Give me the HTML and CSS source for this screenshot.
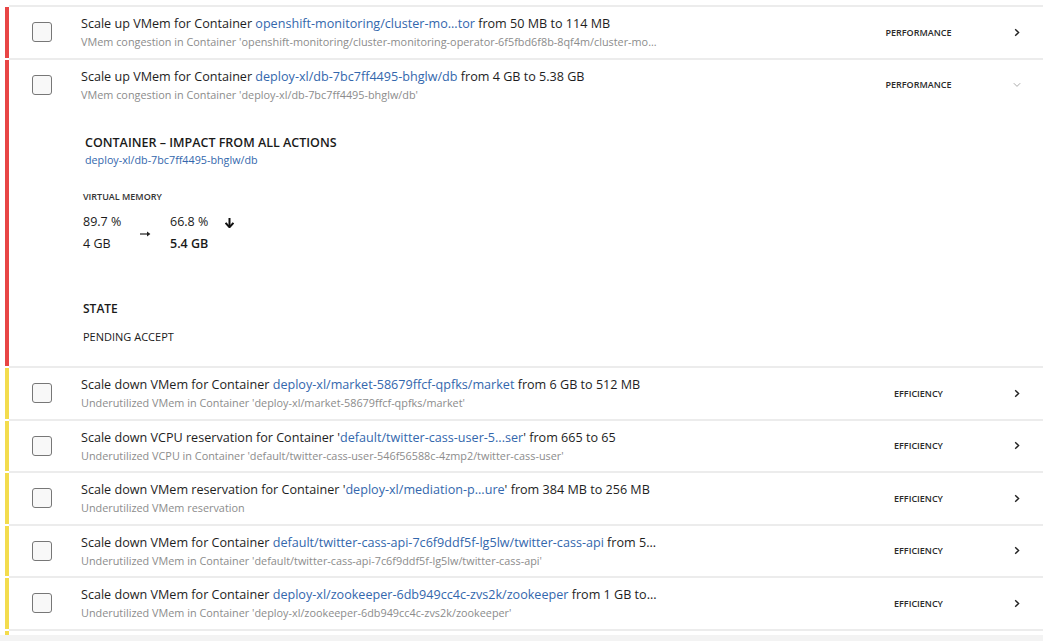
FILE: index.html
```html
<!DOCTYPE html>
<html>
<head>
<meta charset="utf-8">
<link rel="stylesheet" href="styles.css">
</head>
<body>
<div class="list">
  <div class="row sev-red">
    <div class="bar"></div>
    <div class="main">
      <div class="head">
        <div class="check"><span class="box"></span></div>
        <div class="text">
          <div class="title">Scale up VMem for Container <span class="link">openshift-monitoring/cluster-mo...tor</span> from 50 MB to 114 MB</div>
          <div class="sub">VMem congestion in Container 'openshift-monitoring/cluster-monitoring-operator-6f5fbd6f8b-8qf4m/cluster-mo...</div>
        </div>
        <div class="cat">PERFORMANCE</div>
        <div class="chev"><svg width="6" height="9" viewBox="0 0 6 9"><path d="M1.2 1.2 L4.6 4.5 L1.2 7.8" fill="none" stroke="#222" stroke-width="1.4"/></svg></div>
      </div>
    </div>
  </div>

  <div class="row sev-red">
    <div class="bar"></div>
    <div class="main">
      <div class="head">
        <div class="check"><span class="box"></span></div>
        <div class="text">
          <div class="title">Scale up VMem for Container <span class="link">deploy-xl/db-7bc7ff4495-bhglw/db</span> from 4 GB to 5.38 GB</div>
          <div class="sub">VMem congestion in Container 'deploy-xl/db-7bc7ff4495-bhglw/db'</div>
        </div>
        <div class="cat">PERFORMANCE</div>
        <div class="chev"><svg width="8" height="6" viewBox="0 0 8 6"><path d="M0.8 1.2 L4 4.4 L7.2 1.2" fill="none" stroke="#aaa" stroke-width="1"/></svg></div>
      </div>
      <div class="detail">
        <div class="d-title">CONTAINER – IMPACT FROM ALL ACTIONS</div>
        <div class="d-link">deploy-xl/db-7bc7ff4495-bhglw/db</div>
        <div class="d-label">VIRTUAL MEMORY</div>
        <div class="metrics">
          <div class="m-col">
            <div class="m-val">89.7 %</div>
            <div class="m-val">4 GB</div>
          </div>
          <div class="m-arrow"><svg width="11" height="6" viewBox="0 0 11 6"><path d="M0 3 H9" stroke="#222" stroke-width="1.2"/><path d="M7 0.6 L10.4 3 L7 5.4 Z" fill="#222"/></svg></div>
          <div class="m-col">
            <div class="m-val">66.8 %</div>
            <div class="m-val strong">5.4 GB</div>
          </div>
          <div class="m-down"><svg width="9" height="10" viewBox="0 0 9 10"><path d="M4.5 0 V8" stroke="#111" stroke-width="2"/><path d="M0.6 4.8 L4.5 9.2 L8.4 4.8" fill="none" stroke="#111" stroke-width="2"/></svg></div>
        </div>
        <div class="d-state">STATE</div>
        <div class="d-state-val">PENDING ACCEPT</div>
      </div>
    </div>
  </div>

  <div class="row sev-yellow">
    <div class="bar"></div>
    <div class="main">
      <div class="head">
        <div class="check"><span class="box"></span></div>
        <div class="text">
          <div class="title">Scale down VMem for Container <span class="link">deploy-xl/market-58679ffcf-qpfks/market</span> from 6 GB to 512 MB</div>
          <div class="sub">Underutilized VMem in Container 'deploy-xl/market-58679ffcf-qpfks/market'</div>
        </div>
        <div class="cat">EFFICIENCY</div>
        <div class="chev"><svg width="6" height="9" viewBox="0 0 6 9"><path d="M1.2 1.2 L4.6 4.5 L1.2 7.8" fill="none" stroke="#222" stroke-width="1.4"/></svg></div>
      </div>
    </div>
  </div>

  <div class="row sev-yellow">
    <div class="bar"></div>
    <div class="main">
      <div class="head">
        <div class="check"><span class="box"></span></div>
        <div class="text">
          <div class="title">Scale down VCPU reservation for Container '<span class="link">default/twitter-cass-user-5...ser</span>' from 665 to 65</div>
          <div class="sub">Underutilized VCPU in Container 'default/twitter-cass-user-546f56588c-4zmp2/twitter-cass-user'</div>
        </div>
        <div class="cat">EFFICIENCY</div>
        <div class="chev"><svg width="6" height="9" viewBox="0 0 6 9"><path d="M1.2 1.2 L4.6 4.5 L1.2 7.8" fill="none" stroke="#222" stroke-width="1.4"/></svg></div>
      </div>
    </div>
  </div>

  <div class="row sev-yellow">
    <div class="bar"></div>
    <div class="main">
      <div class="head">
        <div class="check"><span class="box"></span></div>
        <div class="text">
          <div class="title">Scale down VMem reservation for Container '<span class="link">deploy-xl/mediation-p...ure</span>' from 384 MB to 256 MB</div>
          <div class="sub">Underutilized VMem reservation</div>
        </div>
        <div class="cat">EFFICIENCY</div>
        <div class="chev"><svg width="6" height="9" viewBox="0 0 6 9"><path d="M1.2 1.2 L4.6 4.5 L1.2 7.8" fill="none" stroke="#222" stroke-width="1.4"/></svg></div>
      </div>
    </div>
  </div>

  <div class="row sev-yellow">
    <div class="bar"></div>
    <div class="main">
      <div class="head">
        <div class="check"><span class="box"></span></div>
        <div class="text">
          <div class="title">Scale down VMem for Container <span class="link">default/twitter-cass-api-7c6f9ddf5f-lg5lw/twitter-cass-api</span> from 5...</div>
          <div class="sub">Underutilized VMem in Container 'default/twitter-cass-api-7c6f9ddf5f-lg5lw/twitter-cass-api'</div>
        </div>
        <div class="cat">EFFICIENCY</div>
        <div class="chev"><svg width="6" height="9" viewBox="0 0 6 9"><path d="M1.2 1.2 L4.6 4.5 L1.2 7.8" fill="none" stroke="#222" stroke-width="1.4"/></svg></div>
      </div>
    </div>
  </div>

  <div class="row sev-yellow">
    <div class="bar"></div>
    <div class="main">
      <div class="head">
        <div class="check"><span class="box"></span></div>
        <div class="text">
          <div class="title">Scale down VMem for Container <span class="link">deploy-xl/zookeeper-6db949cc4c-zvs2k/zookeeper</span> from 1 GB to...</div>
          <div class="sub">Underutilized VMem in Container 'deploy-xl/zookeeper-6db949cc4c-zvs2k/zookeeper'</div>
        </div>
        <div class="cat">EFFICIENCY</div>
        <div class="chev"><svg width="6" height="9" viewBox="0 0 6 9"><path d="M1.2 1.2 L4.6 4.5 L1.2 7.8" fill="none" stroke="#222" stroke-width="1.4"/></svg></div>
      </div>
    </div>
  </div>

  <div class="row sev-yellow stub">
    <div class="bar"></div>
    <div class="main"></div>
  </div>
</div>
<div class="footer"></div>
</body>
</html>
```

FILE: styles.css
```css
* { box-sizing: border-box; }
html, body { margin: 0; padding: 0; }
body {
  background: #f3f3f3;
  font-family: "Open Sans", "Liberation Sans", sans-serif;
  color: #222;
  overflow: hidden;
}
.list {
  background: #fff;
  padding-top: 5px;
  padding-left: 5px;
}
.row {
  display: flex;
}
.bar {
  flex: 0 0 4px;
  margin-top: 2px;
}
.sev-red .bar { background: #e84545; }
.sev-yellow .bar { background: #f3dc4d; }
.main {
  flex: 1;
  border-top: 2px solid #ececec;
  min-width: 0;
}
.head {
  display: flex;
  align-items: center;
  height: 50.5px;
}
.check {
  flex: 0 0 72px;
  padding-left: 23px;
  display: flex;
}
.box {
  width: 20px;
  height: 20px;
  border: 1.5px solid #777;
  border-radius: 3px;
  background: #f8f8f8;
}
.text {
  flex: 1;
  min-width: 0;
  white-space: nowrap;
}
.title {
  font-size: 12.6px;
  line-height: 18px;
  color: #1e1e1e;
}
.link { color: #3367ad; }
.sub {
  font-size: 10.85px;
  line-height: 15px;
  color: #8c8c8c;
  margin-top: 1px;
}
.cat {
  flex: 0 0 143px;
  text-align: center;
  font-size: 9px;
  font-weight: 600;
  color: #2a2a2a;
}
.chev {
  flex: 0 0 53px;
  display: flex;
  justify-content: center;
  align-items: center;
}
.detail {
  padding: 24px 0 22px 74px;
}
.d-title {
  font-size: 12.5px;
  line-height: 16px;
  font-weight: 600;
  color: #1a1a1a;
  padding-left: 2px;
  padding-top: 1px;
}
.d-link {
  margin-top: 2px;
  font-size: 10.75px;
  line-height: 15px;
  color: #3367ad;
  padding-left: 2px;
}
.d-label {
  margin-top: 23px;
  font-size: 9px;
  line-height: 12px;
  font-weight: 600;
  color: #333;
}
.metrics {
  margin-top: 11px;
  display: flex;
  align-items: flex-start;
}
.m-col {
  display: flex;
  flex-direction: column;
  gap: 6px;
}
.m-col:first-child { width: 57px; }
.m-col:nth-child(3) { width: 55px; }
.m-val {
  font-size: 12.5px;
  line-height: 16px;
  color: #1a1a1a;
}
.m-val.strong { font-weight: 600; }
.m-arrow {
  width: 30px;
  padding-top: 17px;
  display: flex;
}
.m-down {
  padding-top: 4px;
  display: flex;
}
.d-state {
  margin-top: 49px;
  font-size: 12px;
  line-height: 16px;
  font-weight: 600;
  color: #1a1a1a;
}
.d-state-val {
  margin-top: 12px;
  font-size: 11px;
  line-height: 15px;
  color: #1a1a1a;
}
.stub .main { height: 6px; }
.footer { height: 20px; background: #f3f3f3; }
```
